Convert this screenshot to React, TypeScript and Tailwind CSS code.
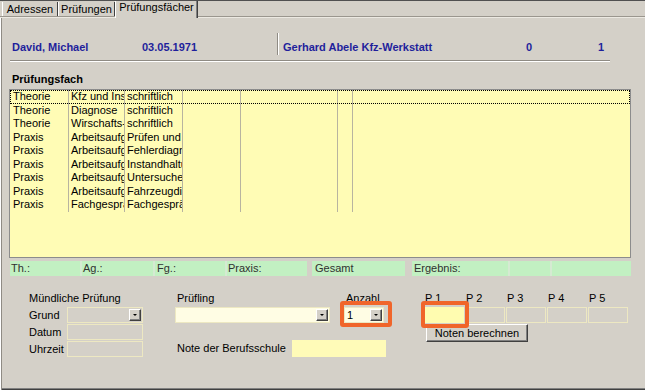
import type { ReactNode } from "react";

type GridRow = [string, string, string];

const rows: GridRow[] = [
  ["Theorie", "Kfz und Instandsetzung", "schriftlich"],
  ["Theorie", "Diagnose", "schriftlich"],
  ["Theorie", "Wirschafts- und Sozialkunde", "schriftlich"],
  ["Praxis", "Arbeitsaufgabe", "Prüfen und Einstellen"],
  ["Praxis", "Arbeitsaufgabe", "Fehlerdiagnose"],
  ["Praxis", "Arbeitsaufgabe", "Instandhaltung"],
  ["Praxis", "Arbeitsaufgabe", "Untersuchen"],
  ["Praxis", "Arbeitsaufgabe", "Fahrzeugdiagnose"],
  ["Praxis", "Fachgespräch", "Fachgespräch"],
];

const pFields = ["P 1", "P 2", "P 3", "P 4", "P 5"];

function DropButton() {
  return (
    <span className="flex h-[12px] w-[12px] shrink-0 items-center justify-center border border-t-white border-l-white border-r-[#404040] border-b-[#404040] bg-[#d4d0c8] shadow-[inset_-1px_-1px_0_#808080]">
      <span className="h-0 w-0 border-x-[2px] border-t-[2px] border-x-transparent border-t-black" />
    </span>
  );
}

function Combo({ className, value }: { className: string; value?: string }) {
  return (
    <div
      className={`flex h-[16px] items-center justify-between border border-[#ede8c2] pl-[2px] pr-[1px] ${className}`}
    >
      <span className="leading-[13px]">{value}</span>
      <DropButton />
    </div>
  );
}

function Orange({ className }: { className: string }) {
  return (
    <span
      className={`pointer-events-none absolute rounded-[3px] border-4 border-[#f0652a] ${className}`}
    />
  );
}

function Tab({ children, selected }: { children: ReactNode; selected?: boolean }) {
  if (selected) {
    return (
      <div className="relative -mb-[2px] flex h-[17px] w-[83px] justify-center bg-[#d4d0c8] shadow-[inset_1px_0_0_#fff,inset_-1px_0_0_#404040,inset_-2px_0_0_#808080]">
        {children}
      </div>
    );
  }
  return (
    <div className="flex h-[14px] justify-center pt-[1px] shadow-[inset_1px_0_0_#fff,inset_-1px_0_0_#404040]">
      {children}
    </div>
  );
}

export default function App() {
  return (
    <div className="flex h-[390px] w-[645px] flex-col overflow-hidden bg-[#d4d0c8] font-['Liberation_Sans',Arial,sans-serif] text-[11px] leading-[13px] text-black">
      <div className="h-px shrink-0 bg-[#505050]" />

      {/* tab strip */}
      <div className="flex h-[15px] shrink-0 items-end pl-[2px]">
        <div className="w-[56px]">
          <Tab>Adressen</Tab>
        </div>
        <div className="w-[57px]">
          <Tab>Prüfungen</Tab>
        </div>
        <Tab selected>Prüfungsfächer</Tab>
      </div>

      {/* panel */}
      <div className="flex flex-1 flex-col shadow-[inset_0_1px_0_#9a968e,inset_0_2px_0_#ece9e2,inset_1px_0_0_#fff,inset_2px_0_0_#8f8b84,inset_0_-1px_0_#404040,inset_0_-2px_0_#808080]">
        {/* header */}
        <div className="mt-[17px] flex h-[22px] items-end pl-[12px] font-bold text-[#1f1f9c]">
          <span className="w-[130px] pb-[1px]">David, Michael</span>
          <span className="w-[135px] pb-[1px]">03.05.1971</span>
          <span className="h-full w-[2px] border-l border-r border-l-[#8f8b84] border-r-white" />
          <span className="w-[247px] pb-[1px] pl-[4px]">Gerhard Abele Kfz-Werkstatt</span>
          <span className="w-[72px] pb-[1px]">0</span>
          <span className="pb-[1px]">1</span>
        </div>
        <div className="ml-[10px] mt-[5px] h-[2px] w-[600px] border-t border-b border-t-[#8f8b84] border-b-white" />

        <div className="ml-[12px] mt-[11px] font-bold">Prüfungsfach</div>

        {/* grid */}
        <div className="ml-[9px] mt-[3px] h-[169px] w-[622px] border border-[#8c8c8c] bg-[#fffcb5]">
          {rows.map((r, i) => (
            <div
              key={i}
              className={`flex h-[13.5px] items-center ${
                i === 0 ? "outline-1 -outline-offset-1 outline-dotted outline-black" : ""
              }`}
            >
              <span className="h-full w-[59px] overflow-hidden whitespace-nowrap border-r border-[#b8b4a0] pl-[3px]">
                {r[0]}
              </span>
              <span className="h-full w-[56px] overflow-hidden whitespace-nowrap border-r border-[#b8b4a0] pl-[2px]">
                {r[1]}
              </span>
              <span className="h-full w-[58px] overflow-hidden whitespace-nowrap border-r border-[#b8b4a0] pl-[2px]">
                {r[2]}
              </span>
              <span className="h-full w-[58px] border-r border-[#b8b4a0]" />
              <span className="h-full w-[97px] border-r border-[#b8b4a0]" />
              <span className="h-full w-[15px] border-r border-[#b8b4a0]" />
            </div>
          ))}
        </div>

        {/* status bar */}
        <div className="ml-[10px] mt-[3px] flex h-[15px] items-center text-[#303030]">
          <span className="flex h-full w-[72px] items-center border-r-2 border-[#d5ead2] bg-[#c2f0c2] pl-[1px]">Th.:</span>
          <span className="flex h-full w-[73px] items-center border-r-2 border-[#d5ead2] bg-[#c2f0c2] pl-[1px]">Ag.:</span>
          <span className="flex h-full w-[72px] items-center border-r-2 border-[#d5ead2] bg-[#c2f0c2] pl-[2px]">Fg.:</span>
          <span className="flex h-full w-[80px] items-center bg-[#c2f0c2] pl-[1px]">Praxis:</span>
          <span className="ml-[5px] flex h-full w-[93px] items-center bg-[#c2f0c2] pl-[3px]">Gesamt</span>
          <span className="ml-[7px] flex h-full w-[98px] items-center border-r-2 border-[#d5ead2] bg-[#c2f0c2] pl-[2px]">Ergebnis:</span>
          <span className="h-full w-[42px] border-r-2 border-[#d5ead2] bg-[#c2f0c2]" />
          <span className="h-full w-[79px] bg-[#c2f0c2]" />
        </div>

        {/* lower form */}
        <div className="mt-[16px] flex">
          <div className="ml-[29px] w-[114px]">
            <div className="h-[15px]">Mündliche Prüfung</div>
            <div className="flex flex-col gap-[1px]">
              <div className="flex h-[16px] items-center">
                <span className="w-[38px]">Grund</span>
                <Combo className="w-[76px] bg-[#d4d0c8]" />
              </div>
              <div className="flex h-[16px] items-center">
                <span className="w-[38px]">Datum</span>
                <span className="h-full w-[76px] border border-[#ede8c2]" />
              </div>
              <div className="flex h-[16px] items-center">
                <span className="w-[38px]">Uhrzeit</span>
                <span className="h-full w-[76px] border border-[#ede8c2]" />
              </div>
            </div>
          </div>

          <div className="ml-[32px] w-[211px]">
            <div className="flex h-[15px]">
              <span className="w-[169px] pl-[2px]">Prüfling</span>
              <span className="pl-[2px]">Anzahl</span>
            </div>
            <div className="flex">
              <Combo className="w-[155px] bg-[#fffde4]" />
              <div className="relative ml-[14px]">
                <Combo className="w-[40px] bg-[#fffde4]" value="1" />
                <Orange className="-left-[4px] -top-[6px] h-[26px] w-[52px]" />
              </div>
            </div>
            <div className="mt-[17px] flex items-center">
              <span className="w-[117px] pl-[2px]">Note der Berufsschule</span>
              <span className="h-[17px] w-[94px] bg-[#fffbb8]" />
            </div>
          </div>

          <div className="ml-[38px]">
            <div className="flex h-[15px] gap-[1px]">
              {pFields.map((p) => (
                <span key={p} className="w-[40px] pl-[1px]">
                  {p}
                </span>
              ))}
            </div>
            <div className="flex gap-[1px]">
              {pFields.map((p, i) =>
                i === 0 ? (
                  <div key={p} className="relative h-[16px] w-[40px] bg-[#fffcb0]">
                    <Orange className="-left-[3px] -top-[6px] h-[27px] w-[48px]" />
                  </div>
                ) : (
                  <div key={p} className="h-[16px] w-[40px] border border-[#ede8c2]" />
                )
              )}
            </div>
            <button
              type="button"
              className="ml-[2px] mt-[1px] flex h-[18px] w-[102px] items-center justify-center border border-t-white border-l-white border-r-[#404040] border-b-[#404040] bg-[#d4d0c8] shadow-[inset_-1px_-1px_0_#808080]"
            >
              Noten berechnen
            </button>
          </div>
        </div>
      </div>
    </div>
  );
}
